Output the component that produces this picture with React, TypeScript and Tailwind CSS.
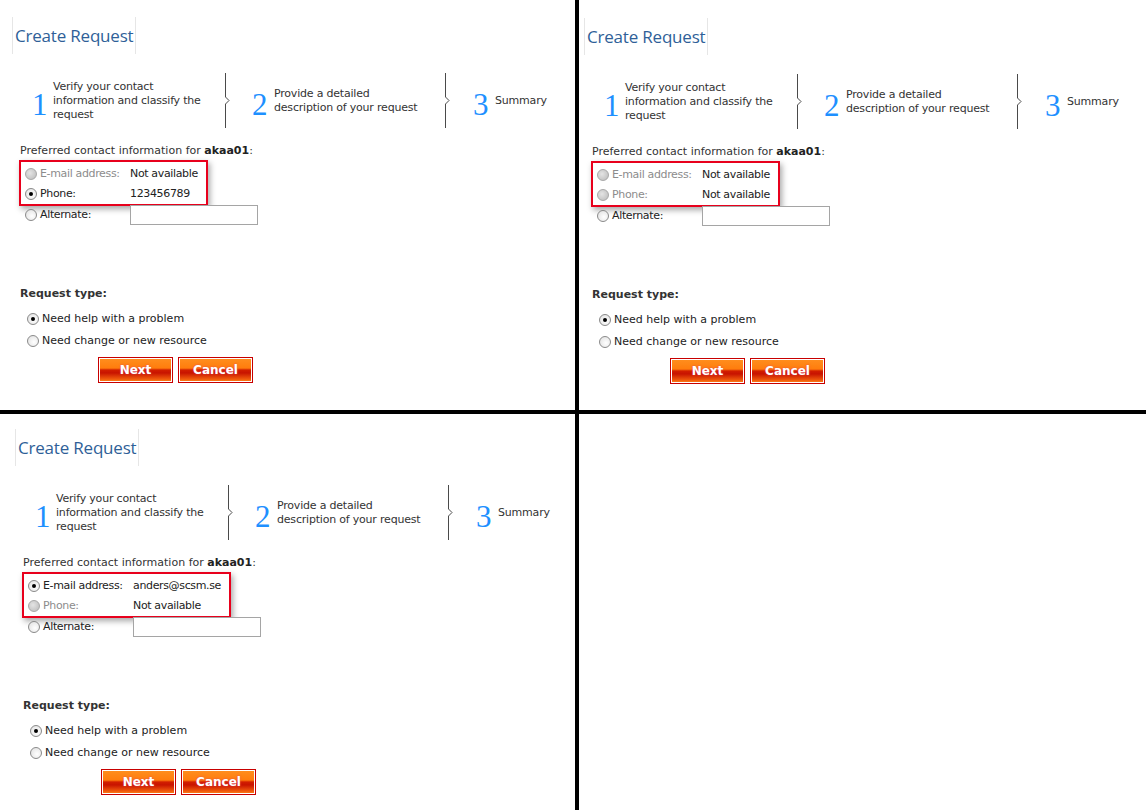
import React from "react";

type Contact = {
  label: string;
  value: string;
  disabled: boolean;
  checked: boolean;
};

function Radio({ checked = false, disabled = false }: { checked?: boolean; disabled?: boolean }) {
  return (
    <span
      className={
        "w-[12px] h-[12px] rounded-full border flex items-center justify-center shrink-0 " +
        (disabled
          ? "border-[#a8a8a8] bg-[radial-gradient(circle_at_40%_40%,#e4e4e4,#b9b9b9)]"
          : "border-[#8a8a8a] bg-[radial-gradient(circle_at_60%_60%,#ffffff,#dedede)]")
      }
    >
      {checked && <span className="w-[4px] h-[4px] rounded-full bg-black"></span>}
    </span>
  );
}

function Separator() {
  return (
    <svg width="7" height="55" viewBox="0 0 7 55" className="shrink-0">
      <path d="M1.5 0 V24 L5 27.5 L1.5 31 V55" fill="none" stroke="#4a4a4a" strokeWidth="1" />
    </svg>
  );
}

function StepNo({ n, w }: { n: string; w: string }) {
  return (
    <span className={"font-['Liberation_Serif',serif] text-[31px] leading-none text-[#1e90ff] pt-[7px] " + w}>{n}</span>
  );
}

function Button({ text }: { text: string }) {
  return (
    <button className="w-[75px] h-[26px] border border-[#c80000] shadow-[inset_0_0_0_1px_#ffffff] bg-[linear-gradient(to_bottom,#ff8f1f_0%,#ff7d0d_42%,#d21e00_50%,#c81400_62%,#f05a0c_88%,#ff8a1a_100%)] text-white font-bold text-[12px] [text-shadow:0_0_2px_#e04060]">
      {text}
    </button>
  );
}

function Panel({ contacts, shift }: { contacts: Contact[]; shift: string }) {
  return (
    <div className="bg-white overflow-hidden">
      <div className={"flex flex-col text-[11px] leading-[14px] text-[#333] " + shift}>
        <div className="pt-[17px] pl-[12px]">
          <div className="inline-flex items-center h-[37px] px-[2px] border-x border-[#e6e6e6]">
            <span className="font-['Open_Sans',sans-serif] text-[17px] tracking-[-0.2px] text-[#2f5f98]">Create Request</span>
          </div>
        </div>

        <div className="mt-[19px] h-[55px] flex tracking-[-0.2px]">
          <div className="w-[224px] flex items-center pl-[32px]">
            <StepNo n="1" w="w-[21px]" />
            <span>Verify your contact<br />information and classify the<br />request</span>
          </div>
          <Separator />
          <div className="w-[213px] flex items-center pl-[21px]">
            <StepNo n="2" w="w-[22px]" />
            <span>Provide a detailed<br />description of your request</span>
          </div>
          <Separator />
          <div className="flex items-center pl-[22px]">
            <StepNo n="3" w="w-[22px]" />
            <span>Summary</span>
          </div>
        </div>

        <div className="mt-[16px] ml-[20px]">
          Preferred contact information for <b className="text-[#222]">akaa01</b>:
        </div>

        <div className="mt-[2px] ml-[19px] self-start flex flex-col border-2 border-[#e8001c] shadow-[2px_3px_6px_rgba(0,0,0,0.35)] pt-[2px] pl-[4px] pr-[8px] tracking-[-0.35px]">
          {contacts.map((c) => (
            <div key={c.label} className="h-[20px] flex items-center">
              <Radio checked={c.checked} disabled={c.disabled} />
              <span className={"ml-[3px] w-[90px] " + (c.disabled ? "text-[#8c8c8c]" : "text-[#222]")}>{c.label}</span>
              <span className="text-[#222]">{c.value}</span>
            </div>
          ))}
        </div>

        <div className="mt-[-1px] ml-[25px] h-[20px] flex items-center tracking-[-0.35px]">
          <Radio />
          <span className="ml-[3px] w-[90px] text-[#222]">Alternate:</span>
          <input className="w-[128px] h-[20px] border border-[#a5a5a5] bg-white outline-none" />
        </div>

        <div className="mt-[62px] ml-[20px] font-bold text-[#333]">Request type:</div>

        <div className="mt-[7px] ml-[27px] flex flex-col">
          <label className="h-[22px] flex items-center">
            <Radio checked />
            <span className="ml-[3px] text-[#222]">Need help with a problem</span>
          </label>
          <label className="h-[22px] flex items-center">
            <Radio />
            <span className="ml-[3px] text-[#222]">Need change or new resource</span>
          </label>
        </div>

        <div className="mt-[5px] ml-[98px] flex gap-[5px]">
          <Button text="Next" />
          <Button text="Cancel" />
        </div>
      </div>
    </div>
  );
}

export default function App() {
  return (
    <div className="w-[1146px] h-[810px] bg-black grid grid-cols-[575px_1fr] grid-rows-[410px_1fr] gap-[4px] font-['DejaVu_Sans',sans-serif]">
      <Panel
        shift="ml-0 mt-0"
        contacts={[
          { label: "E-mail address:", value: "Not available", disabled: true, checked: false },
          { label: "Phone:", value: "123456789", disabled: false, checked: true },
        ]}
      />
      <Panel
        shift="ml-[-7px] mt-[1px]"
        contacts={[
          { label: "E-mail address:", value: "Not available", disabled: true, checked: false },
          { label: "Phone:", value: "Not available", disabled: true, checked: false },
        ]}
      />
      <Panel
        shift="ml-[3px] mt-[-2px]"
        contacts={[
          { label: "E-mail address:", value: "anders@scsm.se", disabled: false, checked: true },
          { label: "Phone:", value: "Not available", disabled: true, checked: false },
        ]}
      />
      <div className="bg-white"></div>
    </div>
  );
}
